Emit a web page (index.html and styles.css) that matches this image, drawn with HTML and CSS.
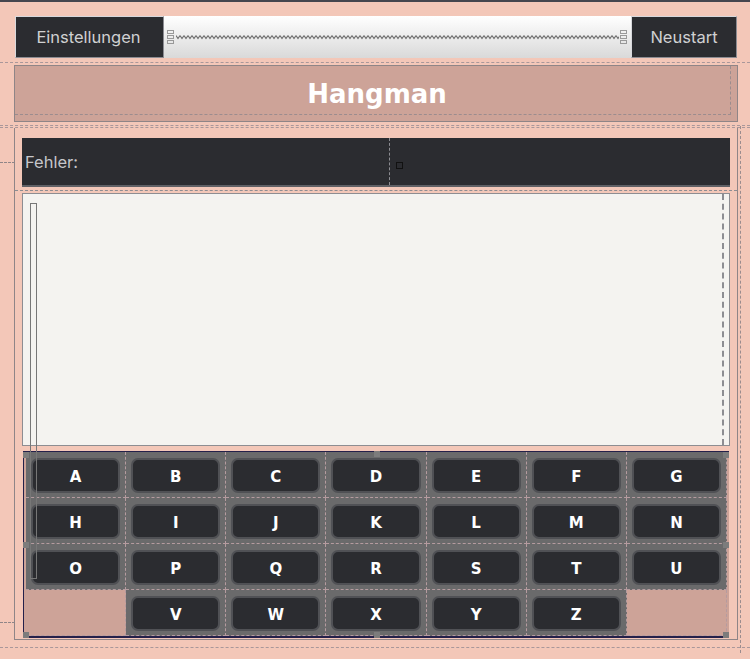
FILE: index.html
```html
<!DOCTYPE html>
<html lang="de">
<head>
<meta charset="utf-8">
<title>Hangman</title>
<link rel="stylesheet" href="styles.css">
</head>
<body>
<div class="app">
  <div class="toolbar">
    <button class="tool-btn settings">Einstellungen</button>
    <div class="slider">
      <svg class="handle" width="8" height="14" viewBox="0 0 8 14"><rect x="0.5" y="0.5" width="6" height="3" fill="none" stroke="#999"/><rect x="0.5" y="5.5" width="6" height="3" fill="none" stroke="#999"/><rect x="0.5" y="10.5" width="6" height="3" fill="none" stroke="#999"/></svg>
      <svg class="zigzag" height="6" preserveAspectRatio="none">
        <defs>
          <pattern id="zz" width="4" height="6" patternUnits="userSpaceOnUse">
            <path d="M0 1.5 L2 4.5 L4 1.5" fill="none" stroke="#6a6a6a" stroke-width="1.1"/>
          </pattern>
        </defs>
        <rect width="100%" height="6" fill="url(#zz)"/>
      </svg>
      <svg class="handle" width="8" height="14" viewBox="0 0 8 14"><rect x="0.5" y="0.5" width="6" height="3" fill="none" stroke="#999"/><rect x="0.5" y="5.5" width="6" height="3" fill="none" stroke="#999"/><rect x="0.5" y="10.5" width="6" height="3" fill="none" stroke="#999"/></svg>
    </div>
    <button class="tool-btn restart">Neustart</button>
  </div>
  <div class="guide guide-a"></div>
  <div class="title-box"><h1>Hangman</h1></div>
  <div class="guide guide-b"></div>
  <div class="guide guide-c"></div>
  <div class="main">
    <span class="side-tick tick-top"></span>
    <span class="side-tick tick-bottom"></span>
    <div class="errors">
      <div class="errors-label">Fehler:</div>
      <div class="errors-value"><span class="mini-box"></span></div>
    </div>
    <div class="guide guide-d"></div>
    <div class="canvas"></div>
    <div class="keyboard">
      <div class="cell"><button class="key">A</button></div>
      <div class="cell"><button class="key">B</button></div>
      <div class="cell"><button class="key">C</button></div>
      <div class="cell"><button class="key">D</button></div>
      <div class="cell"><button class="key">E</button></div>
      <div class="cell"><button class="key">F</button></div>
      <div class="cell"><button class="key">G</button></div>
      <div class="cell"><button class="key">H</button></div>
      <div class="cell"><button class="key">I</button></div>
      <div class="cell"><button class="key">J</button></div>
      <div class="cell"><button class="key">K</button></div>
      <div class="cell"><button class="key">L</button></div>
      <div class="cell"><button class="key">M</button></div>
      <div class="cell"><button class="key">N</button></div>
      <div class="cell"><button class="key">O</button></div>
      <div class="cell"><button class="key">P</button></div>
      <div class="cell"><button class="key">Q</button></div>
      <div class="cell"><button class="key">R</button></div>
      <div class="cell"><button class="key">S</button></div>
      <div class="cell"><button class="key">T</button></div>
      <div class="cell"><button class="key">U</button></div>
      <div class="cell empty"></div>
      <div class="cell"><button class="key">V</button></div>
      <div class="cell"><button class="key">W</button></div>
      <div class="cell"><button class="key">X</button></div>
      <div class="cell"><button class="key">Y</button></div>
      <div class="cell"><button class="key">Z</button></div>
      <div class="cell empty"></div>
      <span class="vbar"></span>
      <span class="grip g-tl"></span>
      <span class="grip g-tm"></span>
      <span class="grip g-tr"></span>
      <span class="grip g-ml"></span>
      <span class="grip g-mr"></span>
      <span class="grip g-bl"></span>
      <span class="grip g-bm"></span>
      <span class="grip g-br"></span>
    </div>
  </div>
  <div class="guide guide-e"></div>
</div>
</body>
</html>
```
FILE: styles.css
```css
* { box-sizing: border-box; }
html, body { margin: 0; padding: 0; }
body {
  background: #f3c7b8;
  font-family: Inter, "Noto Sans", sans-serif;
  width: 750px;
  height: 659px;
  overflow: hidden;
}
.app {
  border-top: 2px solid #45454e;
  height: 659px;
  position: relative;
}
.toolbar {
  display: flex;
  margin: 14px 13px 0 15px;
  height: 42px;
}
.tool-btn {
  background: #2b2c30;
  color: #d0d0d2;
  font-family: Inter, "Noto Sans", sans-serif;
  font-size: 16.5px;
  border: 1px solid #8c8c92;
  border-top-color: #d8d8dc;
  border-left-color: #d8d8dc;
  padding: 0;
  height: 42px;
}
.settings { width: 149px; padding-right: 2px; }
.restart { width: 106px; }
.slider {
  flex: 1;
  background: linear-gradient(#ffffff, #d9d9d9);
  display: flex;
  align-items: center;
  padding: 0 3px 0 3px;
  gap: 1px;
}
.handle { flex: none; }
.zigzag {
  flex: 1;
  min-width: 0;
  display: block;
}
.guide { border-top: 1px dashed #a9979a; }
.guide-a { margin: 4px 0 0 0; }
.title-box {
  margin: 2px 12px 0 14px;
  height: 57px;
  background: #cda398;
  border: 1px solid #8f8587;
  display: flex;
  align-items: center;
  justify-content: center;
  position: relative;
}
.title-box::after {
  content: "";
  position: absolute;
  left: 0; right: 6px; bottom: 6px; top: 0;
  border-bottom: 1px dashed #9b8c8e;
  border-right: 1px dashed #9b8c8e;
}
.title-box h1 {
  margin: 0 0 0 2px;
  font-family: "DejaVu Sans", sans-serif;
  font-weight: bold;
  font-size: 26px;
  color: #ffffff;
}
.guide-b { margin-top: 3px; }
.guide-c { margin-top: 1px; }
.main {
  margin: 0 12px 0 14px;
  height: 512px;
  border-left: 1px solid #8f8587;
  border-right: 1px solid #8f8587;
  border-bottom: 1px solid #8f8587;
  padding: 10px 7px 0 7px;
  position: relative;
}
.main::after {
  content: "";
  position: absolute;
  top: -2px; bottom: -14px; right: -4px;
  border-right: 1px dashed #9b8c8e;
}
.side-tick {
  position: absolute;
  left: -15px;
  width: 15px;
  border-top: 1px dashed #8f8587;
}
.tick-top { top: 34px; }
.tick-bottom { top: 494px; }
.errors {
  display: flex;
  height: 49px;
  background: #2b2c30;
  border-bottom: 2px solid #5f6065;
}
.errors-label {
  width: 368px;
  display: flex;
  align-items: center;
  padding-left: 3px;
  color: #c6c6ca;
  font-size: 16.5px;
  border-right: 1px dashed #8d8d92;
}
.errors-value {
  flex: 1;
  position: relative;
}
.mini-box {
  position: absolute;
  left: 6px; top: 24px;
  width: 7px; height: 7px;
  border: 1px solid #111;
}
.guide-d { margin: 3px -7px 0 -7px; border-top-color: #8d8d92; }
.canvas {
  margin-top: 2px;
  height: 253px;
  background: #f4f3f0;
  border: 1px solid #8d8d92;
  position: relative;
}
.canvas::after {
  content: "";
  position: absolute;
  top: 0; bottom: 0; right: 5px;
  border-right: 2px dashed #8d8d92;
}
.keyboard {
  margin: 5px 0 0 1px;
  display: grid;
  grid-template-columns: repeat(7, 1fr);
  grid-template-rows: 46px 46px 46px 46px;
  width: 706px;
  border-top: 1px solid #24204a;
  border-left: 1px solid #24204a;
  border-bottom: 2px solid #24204a;
  background: #cda398;
  padding: 0 2px 0 2px;
  position: relative;
}
.cell {
  background: #6a6a6b;
  border-right: 1px dashed #b59b9f;
  border-bottom: 1px dashed #b59b9f;
  padding: 6px 5px 4px 5px;
  display: flex;
}
.cell.empty { background: #cda398; }
.key {
  flex: 1;
  background: #2b2c30;
  border: 2px solid #505155;
  border-radius: 7px;
  color: #ffffff;
  font-family: "DejaVu Sans", sans-serif;
  font-weight: bold;
  font-size: 15px;
  padding: 2px 0 0 0;
}
.vbar {
  position: absolute;
  left: 6px;
  top: -249px;
  width: 7px;
  height: 376px;
  border: 1px solid #777;
}
.grip {
  position: absolute;
  width: 6px;
  height: 6px;
  background: #7c7c7c;
}
.g-tl { left: -1px; top: 0; }
.g-tm { left: 350px; top: -1px; }
.g-tr { right: 0; top: 0; }
.g-ml { left: -1px; top: 90px; }
.g-mr { right: 0; top: 90px; }
.g-bl { left: -1px; bottom: -2px; }
.g-bm { left: 350px; bottom: -2px; }
.g-br { right: 0; bottom: -2px; }
.guide-e { margin-top: 7px; }
```
